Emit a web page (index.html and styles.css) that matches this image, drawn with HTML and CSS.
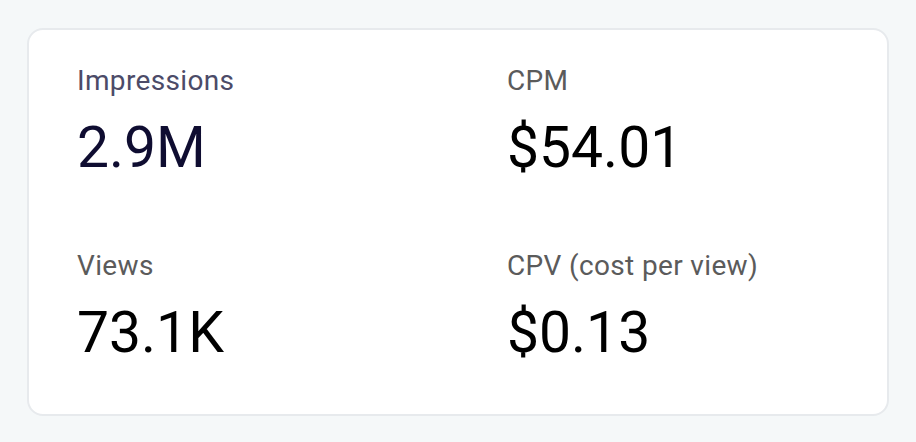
FILE: index.html
```html
<!DOCTYPE html>
<html lang="en">
<head>
    <meta charset="UTF-8">
    <meta name="viewport" content="width=device-width, initial-scale=1.0">
    <title>Campaign stats</title>
    <link rel="stylesheet" href="styles.css">
</head>
<body>
    <div class="card">
        <div class="stat stat-primary">
            <div class="stat-label">Impressions</div>
            <div class="stat-value">2.9M</div>
        </div>
        <div class="stat">
            <div class="stat-label">CPM</div>
            <div class="stat-value">$54.01</div>
        </div>
        <div class="stat">
            <div class="stat-label">Views</div>
            <div class="stat-value">73.1K</div>
        </div>
        <div class="stat">
            <div class="stat-label">CPV (cost per view)</div>
            <div class="stat-value">$0.13</div>
        </div>
    </div>
</body>
</html>
```

FILE: styles.css
```css
body {
    margin: 0;
    padding: 28px 27px 25px;
    background-color: #f5f8f9;
    font-family: 'Roboto', 'Liberation Sans', sans-serif;
    color: #000;
}
.card {
    background: white;
    border: 2px solid #e7eaed;
    border-radius: 16px;
    padding: 31px 48px 49px;
    display: grid;
    grid-template-columns: 1fr 1fr;
    column-gap: 98px;
    row-gap: 66px;
}
.stat-label {
    font-size: 28px;
    line-height: 40px;
    letter-spacing: 0.35px;
    color: #5b5b5b;
    margin-bottom: 15px;
}
.stat-value {
    font-size: 57px;
    line-height: 64px;
    color: #000;
}
.stat-primary .stat-label {
    color: #4c4b68;
}
.stat-primary .stat-value {
    color: #0f0d31;
}
```
